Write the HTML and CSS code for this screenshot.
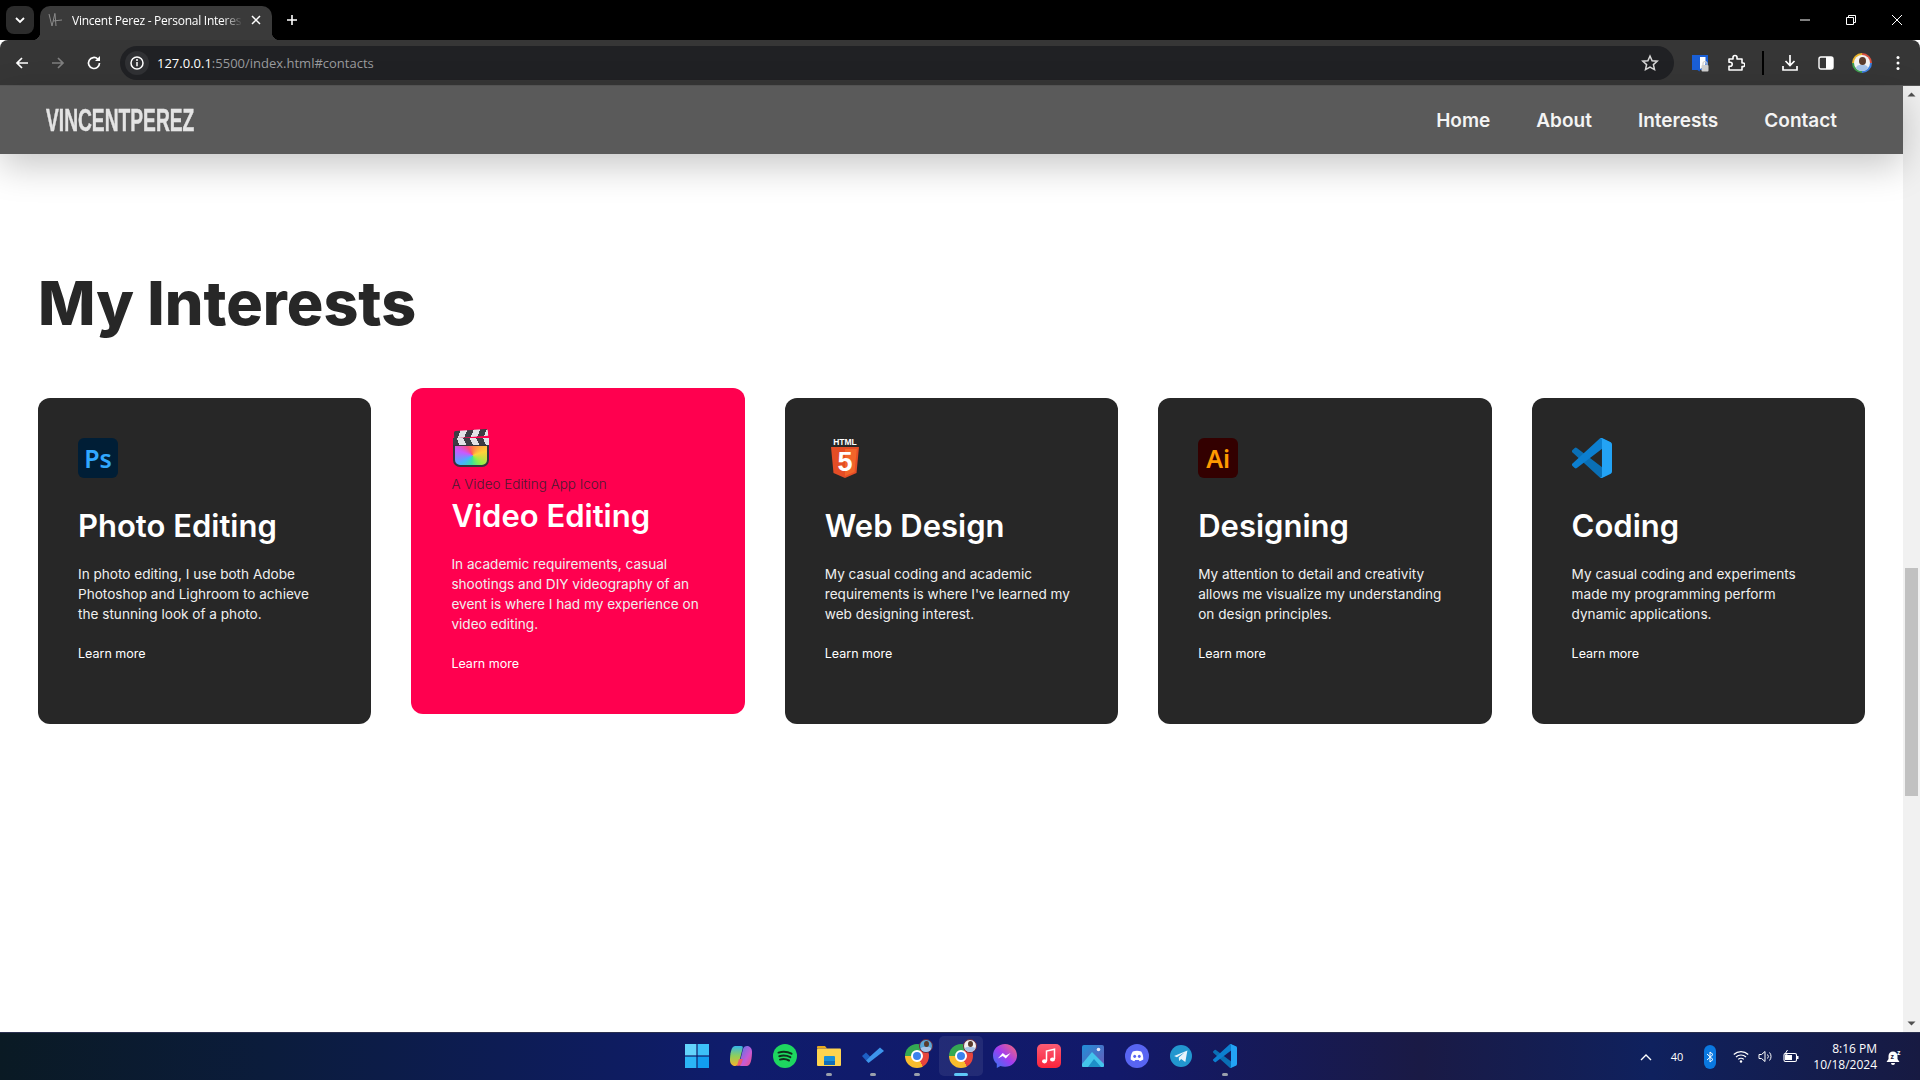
FILE: index.html
```html
<!DOCTYPE html>
<html lang="en">

<head>
    <meta charset="UTF-8">
    <meta name="viewport" content="width=device-width, initial-scale=1.0">
    <title>Vincent Perez - Personal Interests</title>
    <link rel="stylesheet" href="styles.css">
</head>

<body>
    <svg class="defs" width="0" height="0" aria-hidden="true">
        <defs>
            <symbol id="vscode" viewBox="0 0 100 100">
                <path fill="#0a6fb5" d="M96.46 89.2 75.86 99.13a6.23 6.23 0 0 1-7.1-1.2L1.32 36.4a4.17 4.17 0 0 1 0-6.16l5.5-5a4.17 4.17 0 0 1 5.32-.24L93.4 86.6a4.14 4.14 0 0 0 6.64-3.3v.24a6.25 6.25 0 0 1-3.58 5.66Z" />
                <path fill="#0c7fd0" d="M96.46 10.8 75.86.87a6.23 6.23 0 0 0-7.1 1.2L1.32 63.6a4.17 4.17 0 0 0 0 6.16l5.5 5a4.17 4.17 0 0 0 5.32.24L93.4 13.4a4.14 4.14 0 0 1 6.64 3.3v-.24a6.25 6.25 0 0 0-3.58-5.66Z" />
                <path fill="#23a3f5" d="M75.86 99.13a6.23 6.23 0 0 1-7.2-1.2c2.3 2.3 6.24.67 6.24-2.58V4.65c0-3.25-3.94-4.88-6.24-2.58a6.23 6.23 0 0 1 7.2-1.2l20.6 9.9A6.25 6.25 0 0 1 100 16.4v67.2a6.25 6.25 0 0 1-3.54 5.63Z" />
            </symbol>
        </defs>
    </svg>

    <div class="browser">
        <div class="tabstrip">
            <button class="tab-search">
                <svg width="12" height="12" viewBox="0 0 12 12"><path d="M2 4l4 4 4-4" fill="none" stroke="#fff" stroke-width="1.8" /></svg>
            </button>
            <div class="tab">
                <svg class="favicon" width="16" height="16" viewBox="0 0 16 16"><path d="M1 2l3 12 3-13M5 9l9-1M7 2l1 12" fill="none" stroke="#8a8a8a" stroke-width="1" /></svg>
                <span class="tab-title">Vincent Perez - Personal Interes</span>
                <svg class="tab-close" width="10" height="10" viewBox="0 0 10 10"><path d="M1 1l8 8M9 1l-8 8" stroke="#fff" stroke-width="1.5" /></svg>
            </div>
            <svg class="new-tab" width="12" height="12" viewBox="0 0 12 12"><path d="M6 1v10M1 6h10" stroke="#fff" stroke-width="1.6" /></svg>
            <div class="window-controls">
                <span class="win-btn"><svg width="12" height="12" viewBox="0 0 12 12"><path d="M1 6h10" stroke="#fff" /></svg></span>
                <span class="win-btn"><svg width="12" height="12" viewBox="0 0 12 12"><path d="M1.5 3.500h7v7h-7zM3.500 3.500V1.500h7v7h-2" fill="none" stroke="#fff" /></svg></span>
                <span class="win-btn"><svg width="12" height="12" viewBox="0 0 12 12"><path d="M1 1l10 10M11 1L1 11" stroke="#fff" /></svg></span>
            </div>
        </div>

        <div class="toolbar">
            <span class="tool"><svg width="16" height="16" viewBox="0 0 16 16"><path d="M14 8H3M8 3L3 8l5 5" fill="none" stroke="#fff" stroke-width="1.7" /></svg></span>
            <span class="tool"><svg width="16" height="16" viewBox="0 0 16 16"><path d="M2 8h11M8 3l5 5-5 5" fill="none" stroke="#7f7f7f" stroke-width="1.7" /></svg></span>
            <span class="tool"><svg width="16" height="16" viewBox="0 0 16 16"><path d="M13.500 8a5.500 5.500 0 1 1-1.700-4" fill="none" stroke="#fff" stroke-width="1.7" /><path d="M14 1v5H9z" fill="#fff" /></svg></span>
            <div class="omnibox">
                <span class="site-info"><svg width="16" height="16" viewBox="0 0 16 16"><circle cx="8" cy="8" r="6" fill="none" stroke="#fff" stroke-width="1.5" /><path d="M8 7v4.200" stroke="#fff" stroke-width="1.5" /><circle cx="8" cy="5" r="1" fill="#fff" /></svg></span>
                <span class="url"><b>127.0.0.1</b>:5500/index.html#contacts</span>
                <svg class="star" width="18" height="18" viewBox="0 0 18 18"><path d="M9 2l2.100 4.700 5.100.5-3.800 3.400 1.100 5L9 13l-4.500 2.600 1.100-5L1.800 7.200l5.100-.5z" fill="none" stroke="#d8d8d8" stroke-width="1.5" /></svg>
            </div>
            <span class="tool">
                <svg width="18" height="18" viewBox="0 0 18 18"><rect x="1" y="1" width="16" height="15" fill="#1a5fd6" /><path d="M1 12l7.500 5.500L9 16V1H1z" fill="#1a5fd6" /><path d="M9 3h5.500v7c0 2-2.500 3.500-5.500 5z" fill="#fff" /><rect x="10.500" y="11" width="7" height="6.500" rx="1" fill="#d0d0d0" /><path d="M12 11V9.500a2 2 0 0 1 4 0V11" fill="none" stroke="#d0d0d0" stroke-width="1.200" /></svg>
            </span>
            <span class="tool"><svg width="18" height="18" viewBox="0 0 18 18"><path d="M2 5h4V3.500a2 2 0 0 1 4 0V5h5v4h1a1.800 1.800 0 0 1 0 3.600h-1V16H2v-3.800h1.200a2 2 0 0 0 0-4H2z" fill="none" stroke="#fff" stroke-width="1.600" stroke-linejoin="round" /></svg></span>
            <span class="tool-sep"></span>
            <span class="tool"><svg width="18" height="18" viewBox="0 0 18 18"><path d="M9 1v10M4.500 7L9 11.500 13.500 7M2 12v4h14v-4" fill="none" stroke="#fff" stroke-width="1.700" /></svg></span>
            <span class="tool"><svg width="16" height="16" viewBox="0 0 16 16"><rect x="1" y="2" width="14" height="12" rx="2" fill="none" stroke="#fff" stroke-width="1.400" /><path d="M8 2h5a2 2 0 0 1 2 2v8a2 2 0 0 1-2 2H8z" fill="#fff" /></svg></span>
            <span class="tool"><span class="profile-ring"><span class="avatar"><span class="avatar-face"></span><span class="avatar-shirt"></span></span></span></span>
            <span class="tool"><svg width="4" height="16" viewBox="0 0 4 16"><circle cx="2" cy="2.500" r="1.500" fill="#fff" /><circle cx="2" cy="8" r="1.500" fill="#fff" /><circle cx="2" cy="13.500" r="1.500" fill="#fff" /></svg></span>
        </div>

        <div class="viewport">
            <div class="page">
                <nav class="navbar">
                    <span class="logo"><span class="logo-text">VINCENTPEREZ</span></span>
                    <div class="nav-links">
                        <a href="#home">Home</a>
                        <a href="#about">About</a>
                        <a href="#interests">Interests</a>
                        <a href="#contacts">Contact</a>
                    </div>
                </nav>

                <main class="interests">
                    <h1>My Interests</h1>
                    <div class="card-grid">
                        <div class="card">
                            <div class="card-top"><span class="app-badge badge-ps">Ps</span></div>
                            <h3>Photo Editing</h3>
                            <p>In photo editing, I use both Adobe Photoshop and Lighroom to achieve the stunning look of a photo.</p>
                            <a class="more" href="#photo">Learn more</a>
                        </div>

                        <div class="card card-active">
                            <div class="card-top">
                                <span class="clapper">
                                    <span class="clapper-top"></span>
                                    <span class="clapper-mid"></span>
                                    <span class="clapper-body"></span>
                                </span>
                                <span class="alt-text">A Video Editing App Icon</span>
                            </div>
                            <h3>Video Editing</h3>
                            <p>In academic requirements, casual shootings and DIY videography of an event is where I had my experience on video editing.</p>
                            <a class="more" href="#video">Learn more</a>
                        </div>

                        <div class="card">
                            <div class="card-top">
                                <svg class="card-icon" width="40" height="40" viewBox="0 0 40 40">
                                    <text class="html-word" x="20" y="6.500" text-anchor="middle">HTML</text>
                                    <path fill="#e44d26" d="M6 9h28l-2.500 26L20 40 8.500 35z" />
                                    <path fill="#f16529" d="M20 11v27l9.500-4L31.800 11z" />
                                    <text class="html-five" x="20" y="33" text-anchor="middle">5</text>
                                </svg>
                            </div>
                            <h3>Web Design</h3>
                            <p>My casual coding and academic requirements is where I've learned my web designing interest.</p>
                            <a class="more" href="#web">Learn more</a>
                        </div>

                        <div class="card">
                            <div class="card-top"><span class="app-badge badge-ai">Ai</span></div>
                            <h3>Designing</h3>
                            <p>My attention to detail and creativity allows me visualize my understanding on design principles.</p>
                            <a class="more" href="#design">Learn more</a>
                        </div>

                        <div class="card">
                            <div class="card-top"><svg class="card-icon" width="40" height="40"><use href="#vscode" /></svg></div>
                            <h3>Coding</h3>
                            <p>My casual coding and experiments made my programming perform dynamic applications.</p>
                            <a class="more" href="#coding">Learn more</a>
                        </div>
                    </div>
                </main>
            </div>

            <div class="scrollbar">
                <svg width="17" height="17" viewBox="0 0 17 17"><path d="M4.500 10.500h8l-4-4z" fill="#505050" /></svg>
                <div class="scroll-track"><div class="scroll-thumb"></div></div>
                <svg width="17" height="17" viewBox="0 0 17 17"><path d="M4.500 6.500h8l-4 4z" fill="#505050" /></svg>
            </div>
        </div>

        <footer class="taskbar">
            <div class="task-icons">
                <span class="task">
                    <svg width="24" height="24" viewBox="0 0 24 24"><rect x="0" y="0" width="11.400" height="11.400" fill="#63d3fb" /><rect x="12.600" y="0" width="11.400" height="11.400" fill="#3cc0f8" /><rect x="0" y="12.600" width="11.400" height="11.400" fill="#2bb4f6" /><rect x="12.600" y="12.600" width="11.400" height="11.400" fill="#119df0" /></svg>
                </span>
                <span class="task">
                    <svg width="24" height="24" viewBox="0 0 24 24">
                        <defs>
                            <linearGradient id="copA" x1="0" y1="0" x2="0" y2="1"><stop offset="0" stop-color="#35b6e8" /><stop offset=".5" stop-color="#8fcf5a" /><stop offset="1" stop-color="#f7b32b" /></linearGradient>
                            <linearGradient id="copB" x1="0" y1="0" x2="1" y2="1"><stop offset="0" stop-color="#4a78e8" /><stop offset=".6" stop-color="#c65ad6" /><stop offset="1" stop-color="#f0507a" /></linearGradient>
                        </defs>
                        <path fill="url(#copA)" d="M6 2h6c2 0 2 1 1.500 3L10 19c-.6 2-2 3-4 3-3 0-5-2.500-5-6 0-5 1-14 5-14z" />
                        <path fill="url(#copB)" d="M18 22h-6c-2 0-2-1-1.500-3L14 5c.6-2 2-3 4-3 3 0 5 2.500 5 6 0 5-1 14-5 14z" />
                        <path fill="#ea5a6e" d="M8 22c3 0 4-1 5-4l1-3h-4l-2 7z" />
                    </svg>
                </span>
                <span class="task">
                    <svg width="24" height="24" viewBox="0 0 24 24"><circle cx="12" cy="12" r="12" fill="#1ed760" /><path d="M5.500 8.600c4.500-1.300 9-1 13 1.100M6.300 12.200c3.700-1 7.500-.8 11 1M7 15.600c3-.8 6.200-.6 9 .9" fill="none" stroke="#10301c" stroke-width="2" stroke-linecap="round" /></svg>
                </span>
                <span class="task has-dot">
                    <svg width="24" height="24" viewBox="0 0 24 24"><path d="M0 3a1 1 0 0 1 1-1h7l2 2.500h-10z" fill="#e8a91e" /><rect x="0" y="4.500" width="24" height="17.500" rx="1" fill="#ffd44f" /><rect x="7" y="12" width="11" height="9" rx="1" fill="#1a8fd8" /><rect x="7" y="17" width="11" height="4" fill="#0f6cb8" /></svg>
                </span>
                <span class="task has-dot">
                    <svg width="24" height="24" viewBox="0 0 24 24"><path d="M1 12l4-3.500 4 4-4 4z" fill="#1d5fc4" /><path d="M5 16.500l2.500 2.500L23 7l-4-3.500-10 9z" fill="#3d95ec" /></svg>
                </span>
                <span class="task has-dot">
                    <span class="chrome"><span class="chrome-dot"></span></span>
                    <span class="avatar avatar-badge avatar-blue"><span class="avatar-face"></span><span class="avatar-shirt"></span></span>
                </span>
                <span class="task task-active has-bar">
                    <span class="chrome"><span class="chrome-dot"></span></span>
                    <span class="avatar avatar-badge"><span class="avatar-face"></span><span class="avatar-shirt"></span></span>
                </span>
                <span class="task">
                    <svg width="24" height="24" viewBox="0 0 24 24">
                        <defs><linearGradient id="msg" x1="0" y1="1" x2="1" y2="0"><stop offset="0" stop-color="#2c7bf4" /><stop offset=".5" stop-color="#a13cf0" /><stop offset="1" stop-color="#fb6a70" /></linearGradient></defs>
                        <path fill="url(#msg)" d="M12 0C5.300 0 0 5 0 11.500c0 3.400 1.400 6.300 3.800 8.300V24l3.600-2c1.400.5 3 .8 4.600.8 6.700 0 12-5 12-11.300S18.700 0 12 0z" />
                        <path fill="#fff" d="M4.800 14.500l5-5.500 3 2.500 4.800-2.500-4.800 5.500-3-2.500z" />
                    </svg>
                </span>
                <span class="task">
                    <svg width="24" height="24" viewBox="0 0 24 24">
                        <defs><linearGradient id="mus" x1="0" y1="0" x2="0" y2="1"><stop offset="0" stop-color="#fb5c74" /><stop offset="1" stop-color="#fa233b" /></linearGradient></defs>
                        <rect width="24" height="24" rx="5" fill="url(#mus)" />
                        <path d="M9.500 17V7l8-1.700V15" fill="none" stroke="#fff" stroke-width="1.500" />
                        <ellipse cx="7.500" cy="17.300" rx="2.500" ry="2.100" fill="#fff" />
                        <ellipse cx="15.500" cy="15.500" rx="2.500" ry="2.100" fill="#fff" />
                    </svg>
                </span>
                <span class="task">
                    <svg width="24" height="24" viewBox="0 0 24 24">
                        <defs><linearGradient id="pho" x1="0" y1="0" x2="1" y2="1"><stop offset="0" stop-color="#1f8fd8" /><stop offset="1" stop-color="#6a5ab8" /></linearGradient></defs>
                        <rect width="22" height="22" x="1" y="1" rx="2" fill="url(#pho)" />
                        <circle cx="17.500" cy="5.500" r="1.800" fill="#e8e8f8" />
                        <path d="M1 20l10-12 12 12v2a1 1 0 0 1-1 1H2a1 1 0 0 1-1-1z" fill="#43c4ec" />
                        <path d="M7 23l6-8 7 8z" fill="#1d8fc8" />
                    </svg>
                </span>
                <span class="task">
                    <svg width="24" height="24" viewBox="0 0 24 24"><circle cx="12" cy="12" r="12" fill="#5865f2" /><path d="M7.800 7.500c2.800-1 5.600-1 8.400 0 1.500 2.200 2.200 4.800 2.100 8-1.200.9-2.400 1.500-3.600 1.800l-.9-1.400H10.200l-.9 1.400c-1.200-.3-2.400-.9-3.600-1.800-.1-3.200.6-5.800 2.100-8z" fill="#fff" /><ellipse cx="9.700" cy="12.300" rx="1.400" ry="1.600" fill="#5865f2" /><ellipse cx="14.300" cy="12.300" rx="1.400" ry="1.600" fill="#5865f2" /></svg>
                </span>
                <span class="task">
                    <svg width="22" height="22" viewBox="0 0 24 24"><circle cx="12" cy="12" r="12" fill="#2297cf" /><path d="M4.500 12L19 6l-2.300 12.500-4.500-3.200-2.200 2.200-.5-4L16 8l-8.500 5.300z" fill="#e8f4fb" /></svg>
                </span>
                <span class="task has-dot"><svg width="24" height="24"><use href="#vscode" /></svg></span>
            </div>

            <div class="tray">
                <svg width="12" height="8" viewBox="0 0 12 8"><path d="M1 7l5-5 5 5" fill="none" stroke="#fff" stroke-width="1.400" /></svg>
                <span class="tray-num">40</span>
                <span class="bt-pill"><svg width="8" height="12" viewBox="0 0 8 12"><path d="M1 3l6 5.500L4 11V1l3 2.500L1 9" fill="none" stroke="#fff" stroke-width="1" /></svg></span>
                <svg width="16" height="13" viewBox="0 0 16 13"><path d="M.8 4.500a10.500 10.500 0 0 1 14.400 0M3 7a7.300 7.300 0 0 1 10 0M5.200 9.400a4 4 0 0 1 5.600 0" fill="none" stroke="#fff" stroke-width="1.200" /><circle cx="8" cy="11.500" r="1.200" fill="#fff" /></svg>
                <svg width="16" height="13" viewBox="0 0 16 13"><path d="M1 4.500h2.500L7 1.500v10l-3.500-3H1z" fill="none" stroke="#fff" /><path d="M9.500 4.500a3 3 0 0 1 0 4M11.500 2.500a6 6 0 0 1 0 8" fill="none" stroke="#fff" /></svg>
                <svg width="16" height="13" viewBox="0 0 16 13"><rect x="1" y="3.500" width="12.500" height="8" rx="1.500" fill="none" stroke="#fff" stroke-width="1.100" /><rect x="14" y="6" width="1.500" height="3" fill="#fff" /><path d="M2 5h7v5H2z" fill="#fff" /><path d="M4.500 0L2 4h2L3 7" fill="none" stroke="#fff" /></svg>
                <div class="clock"><span>8:16 PM</span><span>10/18/2024</span></div>
                <svg width="16" height="16" viewBox="0 0 16 16"><path d="M7 2.500a4.500 4.500 0 0 0-4.500 4.500v3L.5 13h13l-2-3V7A4.500 4.500 0 0 0 7 2.500z" fill="#fff" /><path d="M5 14a2 2 0 0 0 4 0z" fill="#fff" /><text class="bell-z" x="4.500" y="10">z</text><text class="bell-zz" x="11" y="5.500">z</text></svg>
            </div>
        </footer>
    </div>
</body>

</html>
```

FILE: styles.css
```css
* {
    margin: 0;
    padding: 0;
    box-sizing: border-box;
}

body,
html {
    overflow: hidden;
}

body {
    font-family: Inter, "Noto Sans", sans-serif;
    background: #fff;
    width: 100vw;
    height: 100vh;
}

a {
    color: inherit;
    text-decoration: none;
}

.defs {
    display: block;
    height: 0;
}

.browser {
    display: flex;
    flex-direction: column;
    height: 1080px;
}

/* browser chrome */
.tabstrip {
    display: flex;
    align-items: flex-start;
    height: 40px;
    padding: 6px 0 0 6px;
    background: #000;
}

.tab-search {
    display: flex;
    align-items: center;
    justify-content: center;
    width: 28px;
    height: 28px;
    border: none;
    border-radius: 8px;
    background: #2c2c2c;
}

.tab {
    position: relative;
    display: flex;
    align-items: center;
    gap: 8px;
    width: 232px;
    height: 34px;
    margin-left: 6px;
    padding: 0 11px 6px 8px;
    background: #3a3a3a;
    border-radius: 10px 10px 0 0;
    color: #fff;
}

.tab::after {
    content: "";
    position: absolute;
    right: -8px;
    bottom: 0;
    width: 8px;
    height: 8px;
    background: radial-gradient(circle at 100% 0, #000 8px, #3a3a3a 8.5px);
}

.tab::before {
    content: "";
    position: absolute;
    left: -8px;
    bottom: 0;
    width: 8px;
    height: 8px;
    background: radial-gradient(circle at 0 0, #000 8px, #3a3a3a 8.5px);
}

.tab-title {
    flex: 1;
    white-space: nowrap;
    font-family: "Open Sans", sans-serif;
    font-size: 12px;
    letter-spacing: -0.25px;
    -webkit-mask-image: linear-gradient(90deg, #000 88%, transparent 100%);
    mask-image: linear-gradient(90deg, #000 88%, transparent 100%);
}

.favicon,
.tab-close {
    flex: none;
}

.new-tab {
    margin: 8px 0 0 14px;
}

.window-controls {
    display: flex;
    margin-left: auto;
    margin-top: -6px;
}

.win-btn {
    display: flex;
    align-items: center;
    justify-content: center;
    width: 46px;
    height: 40px;
}

.toolbar {
    display: flex;
    align-items: center;
    height: 46px;
    padding: 0 4px;
    background: #363636;
    border-bottom: 1px solid #575757;
    border-radius: 8px 8px 0 0;
}

.tool {
    display: flex;
    flex: none;
    align-items: center;
    justify-content: center;
    width: 36px;
    height: 36px;
}

.tool-sep {
    flex: none;
    width: 2px;
    height: 24px;
    margin: 0 8px;
    background: #000;
}

.omnibox {
    display: flex;
    flex: 1;
    align-items: center;
    height: 34px;
    margin: 0 8px;
    padding-left: 5px;
    background: #202124;
    border-radius: 17px;
}

.site-info {
    display: flex;
    align-items: center;
    justify-content: center;
    width: 24px;
    height: 24px;
    border-radius: 50%;
    background: #303134;
}

.url {
    margin-left: 8px;
    font-family: "Open Sans", sans-serif;
    font-size: 13px;
    color: #9a9b9e;
}

.url b {
    font-weight: 400;
    color: #fff;
}

.star {
    margin-left: auto;
    margin-right: 15px;
}

.profile-ring {
    display: block;
    width: 20px;
    height: 20px;
    padding: 2px;
    border-radius: 50%;
    background: conic-gradient(#d8513f 0 25%, #3c7fe0 25% 50%, #3fa04f 50% 75%, #e8b32b 75% 100%);
}

.avatar {
    display: block;
    width: 16px;
    height: 16px;
    overflow: hidden;
    border-radius: 50%;
    background: #f2f2f2;
}

.avatar-face {
    display: block;
    width: 7px;
    height: 8px;
    margin: 2px auto 0;
    border-radius: 50%;
    background: #5a3c2c;
}

.avatar-shirt {
    display: block;
    width: 12px;
    height: 6px;
    margin: 0 auto;
    border-radius: 4px 4px 0 0;
    background: #a8c4e8;
}

/* page */
.viewport {
    display: flex;
    flex: 1;
    min-height: 0;
}

.page {
    flex: 1;
    min-width: 0;
    background: #fff;
}

.navbar {
    position: relative;
    z-index: 2;
    display: flex;
    align-items: center;
    justify-content: space-between;
    height: 68px;
    padding: 0 66px 0 46px;
    background: #5a5a5a;
    box-shadow: 0 12px 36px rgba(0, 0, 0, 0.22);
    color: #fff;
}

.logo {
    display: block;
    width: 148px;
}

.logo-text {
    display: inline-block;
    font-family: "Liberation Sans", Arial, sans-serif;
    font-size: 32px;
    font-weight: 700;
    color: #e4e4e4;
    white-space: nowrap;
    -webkit-text-stroke: 0.5px #e4e4e4;
    transform: scaleX(0.6);
    transform-origin: left center;
}

.nav-links {
    display: flex;
    gap: 46px;
    font-size: 19px;
    font-weight: 600;
    color: #f4f4f4;
}

.interests {
    padding: 119px 38px 0;
}

h1 {
    height: 60px;
    font-size: 61px;
    line-height: 60px;
    font-weight: 800;
    color: #272727;
}

.card-grid {
    display: grid;
    grid-template-columns: repeat(5, 1fr);
    gap: 40px;
    margin-top: 65px;
}

.card {
    padding: 40px;
    border-radius: 12px;
    background: #272727;
    color: #fff;
}

.card-active {
    background: #ff004f;
    transform: translateY(-10px);
}

.card-top {
    display: flex;
    flex-direction: column;
    align-items: flex-start;
    height: 68px;
}

.card-icon {
    display: block;
    flex: none;
}

.app-badge {
    display: flex;
    align-items: center;
    justify-content: center;
    width: 40px;
    height: 40px;
    border-radius: 6px;
    font-family: "Noto Sans", sans-serif;
    font-size: 25px;
    font-weight: 600;
}

.badge-ps {
    background: #001e36;
    color: #31a8ff;
}

.badge-ai {
    background: #330000;
    color: #ff9a00;
}

.html-word {
    font-family: "Liberation Sans", sans-serif;
    font-size: 8.500px;
    font-weight: 700;
    fill: #fff;
}

.html-five {
    font-family: "Liberation Sans", sans-serif;
    font-size: 27px;
    font-weight: 700;
    fill: #fff;
}

.clapper {
    display: block;
    flex: none;
    width: 40px;
    height: 40px;
    padding: 2px 2px 0;
}

.clapper-top {
    display: block;
    height: 7px;
    margin: 0 1px;
    border-radius: 2px 2px 0 0;
    background: repeating-linear-gradient(115deg, #3d3d44 0 6px, #e2e2e6 6px 12px);
    transform: rotate(-4deg);
}

.clapper-mid {
    display: block;
    height: 7px;
    margin-top: 1px;
    background: repeating-linear-gradient(65deg, #3d3d44 0 6px, #e2e2e6 6px 12px);
}

.clapper-body {
    display: block;
    height: 22px;
    border: 2px solid #34343c;
    border-top-width: 1px;
    border-radius: 0 0 7px 7px;
    background: conic-gradient(from 0deg at 55% 50%, #ff7a4a, #ffd23a 20%, #8bf04a 38%, #3ae0a0 52%, #4ab0ff 66%, #c85aff 80%, #ff4a7a 92%, #ff7a4a);
}

.alt-text {
    margin-top: 6px;
    font-size: 13.500px;
    line-height: 20px;
    font-weight: 300;
    color: #4d1a30;
    white-space: nowrap;
}

h3 {
    font-size: 31px;
    line-height: 40px;
    font-weight: 600;
    white-space: nowrap;
}

.card p {
    margin-top: 18px;
    font-size: 13.600px;
    line-height: 20px;
    color: #f0f0f0;
}

.more {
    display: block;
    margin-top: 20px;
    font-size: 12.500px;
    line-height: 20px;
}

.scrollbar {
    display: flex;
    flex-direction: column;
    flex: none;
    width: 17px;
    background: #f1f1f1;
}

.scroll-track {
    flex: 1;
    padding: 465px 2px 0;
}

.scroll-thumb {
    height: 228px;
    background: #c1c1c1;
}

/* windows taskbar */
.taskbar {
    display: flex;
    flex: none;
    align-items: center;
    justify-content: center;
    position: relative;
    height: 48px;
    padding-bottom: 1px;
    background: linear-gradient(90deg, #0a1a24 0%, #0b1c3c 14%, #0f1c6c 38%, #12196a 58%, #1a1a45 74%, #0f215e 86%, #171a42 100%);
    border-top: 1px solid #2a3050;
}

.task-icons {
    display: flex;
    margin-left: 2px;
}

.task {
    position: relative;
    display: flex;
    align-items: center;
    justify-content: center;
    width: 44px;
    height: 40px;
}

.task-active {
    background: rgba(255, 255, 255, 0.08);
    border-radius: 5px;
}

.has-dot::after {
    content: "";
    position: absolute;
    left: 19px;
    bottom: 0;
    width: 6px;
    height: 3px;
    border-radius: 2px;
    background: #9aa0ac;
}

.has-bar::after {
    content: "";
    position: absolute;
    left: 15px;
    bottom: 0;
    width: 14px;
    height: 3px;
    border-radius: 2px;
    background: #5ec8f8;
}

.chrome {
    display: block;
    position: relative;
    width: 24px;
    height: 24px;
    border-radius: 50%;
    background: conic-gradient(from 30deg, #e8453c 0 120deg, #f9bc2d 120deg 240deg, #34a853 240deg 360deg);
}

.chrome-dot {
    display: block;
    width: 12px;
    height: 12px;
    margin: 6px;
    border: 2px solid #fff;
    border-radius: 50%;
    background: #3b82ee;
}

.avatar-badge {
    position: absolute;
    top: 3px;
    right: 6px;
    width: 14px;
    height: 14px;
    border: 1px solid #6a2a3a;
}

.avatar-badge .avatar-face {
    width: 5px;
    height: 6px;
    margin-top: 1px;
}

.avatar-blue {
    background: #5aa8d8;
}

.tray {
    position: absolute;
    top: 0;
    right: 0;
    display: flex;
    align-items: center;
    gap: 9px;
    height: 47px;
    padding-right: 18px;
    color: #fff;
    font-family: "Open Sans", sans-serif;
    font-size: 12px;
}

.tray-num {
    margin: 0 12px 0 10px;
    font-size: 11px;
}

.bt-pill {
    display: flex;
    align-items: center;
    justify-content: center;
    width: 12px;
    height: 24px;
    margin-right: 8px;
    border-radius: 6px;
    background: #0a78e0;
}

.clock {
    display: flex;
    flex-direction: column;
    align-items: flex-end;
    margin-left: 5px;
    line-height: 16px;
}

.bell-z {
    font-family: "Liberation Sans", sans-serif;
    font-size: 7px;
    font-weight: 700;
    fill: #1a1a3e;
}

.bell-zz {
    font-family: "Liberation Sans", sans-serif;
    font-size: 7px;
    font-weight: 700;
    fill: #fff;
}
```
